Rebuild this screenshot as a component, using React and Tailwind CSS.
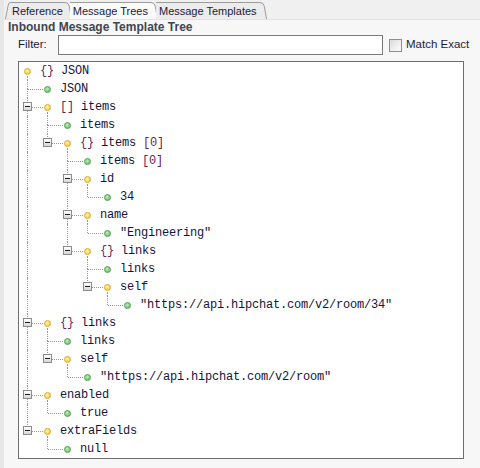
import React from 'react';

const tree = {
  pre: '{}', name: 'JSON', obj: true,
  children: [
    { name: 'JSON' },
    {
      pre: '[]', name: 'items', obj: true,
      children: [
        { name: 'items' },
        {
          pre: '{}', name: 'items', suf: '[0]', obj: true,
          children: [
            { name: 'items', suf: '[0]' },
            { name: 'id', obj: true, children: [{ name: '34' }] },
            { name: 'name', obj: true, children: [{ name: '"Engineering"' }] },
            {
              pre: '{}', name: 'links', obj: true,
              children: [
                { name: 'links' },
                { name: 'self', obj: true, children: [{ name: '"https://api.hipchat.com/v2/room/34"' }] },
              ],
            },
          ],
        },
      ],
    },
    {
      pre: '{}', name: 'links', obj: true,
      children: [
        { name: 'links' },
        { name: 'self', obj: true, children: [{ name: '"https://api.hipchat.com/v2/room"' }] },
      ],
    },
    { name: 'enabled', obj: true, children: [{ name: 'true' }] },
    { name: 'extraFields', obj: true, children: [{ name: 'null' }] },
  ],
};

// flatten into rows, keeping which guide columns continue
function flatten(node, level, cont, last, out) {
  out.push({ node, level, cont, last });
  const kids = node.children || [];
  const next = level > 0 ? [...cont, !last] : [];
  kids.forEach((c, i) => flatten(c, level + 1, next, i === kids.length - 1, out));
  return out;
}
const rows = flatten(tree, 0, [], true, []);

const dot = 'border-dotted border-[#9a9a9a]';

function Dot({ obj }) {
  return obj ? (
    <span className="absolute left-[5px] top-[6px] w-[7px] h-[7px] rounded-full border border-[#d9a628] bg-[radial-gradient(circle_at_40%_35%,#fff2a8,#f2c640)]" />
  ) : (
    <span className="absolute left-[5px] top-[6px] w-[7px] h-[7px] rounded-full border border-[#4c9c4c] bg-[radial-gradient(circle_at_40%_35%,#bfe9bf,#62b962)]" />
  );
}

function Expander() {
  return (
    <span className="absolute left-[4px] top-[4px] w-[9px] h-[9px] border border-[#8a8a8a] bg-[linear-gradient(#ffffff,#d6d6d6)] flex items-center justify-center">
      <span className="w-[5px] h-[1px] bg-[#1c1c1c]" />
    </span>
  );
}

function Row({ node, level, cont, last }) {
  const hasKids = !!node.children;
  return (
    <div className="flex h-[18px] items-stretch">
      {cont.map((c, k) => (
        <div key={k} className="relative w-[20px] shrink-0">
          {c && <span className={`absolute left-[8px] top-0 bottom-0 border-l ${dot}`} />}
        </div>
      ))}
      {level > 0 && (
        <div className="relative w-[20px] shrink-0">
          <span className={`absolute left-[8px] top-0 h-[9px] border-l ${dot}`} />
          {!last && <span className={`absolute left-[8px] top-[9px] bottom-0 border-l ${dot}`} />}
          <span className={`absolute left-[9px] top-[9px] w-[15px] border-t ${dot}`} />
          {hasKids && <Expander />}
        </div>
      )}
      <div className="relative w-[20px] shrink-0">
        <Dot obj={node.obj} />
        {hasKids && <span className={`absolute left-[8px] top-[14px] bottom-0 border-l ${dot}`} />}
      </div>
      <span className="ml-[1px] whitespace-pre text-[12px] leading-[19px] tracking-[-0.2px] text-[#15153a]">
        {node.pre && <span className="text-[#6c2356]">{node.pre} </span>}
        {node.name}
        {node.suf && <span className="text-[#6c2356]"> {node.suf}</span>}
      </span>
    </div>
  );
}

function Tab({ label, first, active }) {
  const bg = active ? '#fafafa' : '#ececec';
  return (
    <div className="flex h-[17px] items-stretch -mr-[2px]">
      {first && (
        <svg width="5" height="17" className="shrink-0">
          <path d="M0.5 17 L3 4 Q3.6 0.5 5 0.5 L5 17 Z" fill={bg} />
          <path d="M0.5 17 L3 4 Q3.6 0.5 5 0.5" fill="none" stroke="#9c9c9c" />
        </svg>
      )}
      <div
        className={`flex items-center border-t border-[#9c9c9c] text-[11px] text-[#1a1a3a] ${first ? 'pl-[2px] pr-[2px]' : 'pl-[3px] pr-[3px]'} ${active ? 'bg-[#fafafa]' : 'bg-[#ececec]'}`}
      >
        {label}
      </div>
      <svg width="7" height="17" className="shrink-0">
        <path d="M0 0.5 Q3.5 0.5 4.2 4 L6.5 17 L0 17 Z" fill={bg} />
        <path d="M0 0.5 Q3.5 0.5 4.2 4 L6.5 17" fill="none" stroke="#9c9c9c" />
      </svg>
    </div>
  );
}

export default function App() {
  return (
    <div className="w-[480px] h-[468px] overflow-hidden bg-[#f7f7f7] border-l-[4px] border-[#e6e6e6] font-['Liberation_Sans',Arial,sans-serif]">
      <div className="flex h-[20px] items-end pl-[1px] bg-[#f0f0f0] border-b border-[#e2e2e2]">
        <Tab label="Reference" first />
        <Tab label="Message Trees" active />
        <Tab label="Message Templates" />
      </div>
      <div className="pl-[4px] h-[14px] text-[12px] leading-[14px] font-bold text-[#3e4652]">
        Inbound Message Template Tree
      </div>
      <div className="flex items-center h-[20px] mt-[1px] pl-[14px]">
        <span className="w-[40px] text-[11.5px] text-[#1a1a3a]">Filter:</span>
        <div className="w-[325px] h-[20px] border border-[#7a7a7a] bg-white" />
        <span className="ml-[6px] w-[13px] h-[13px] border border-[#8e8e8e] bg-[linear-gradient(135deg,#dcdcdc,#fdfdfd)]" />
        <span className="ml-[4px] text-[11.5px] text-[#1a1a3a]">Match Exact</span>
      </div>
      <div className="mt-[6px] ml-[14px] w-[446px] h-[398px] border border-[#6f6f6f] bg-white overflow-hidden font-['Liberation_Mono',monospace]">
        {rows.map((r, i) => (
          <Row key={i} {...r} />
        ))}
      </div>
    </div>
  );
}
